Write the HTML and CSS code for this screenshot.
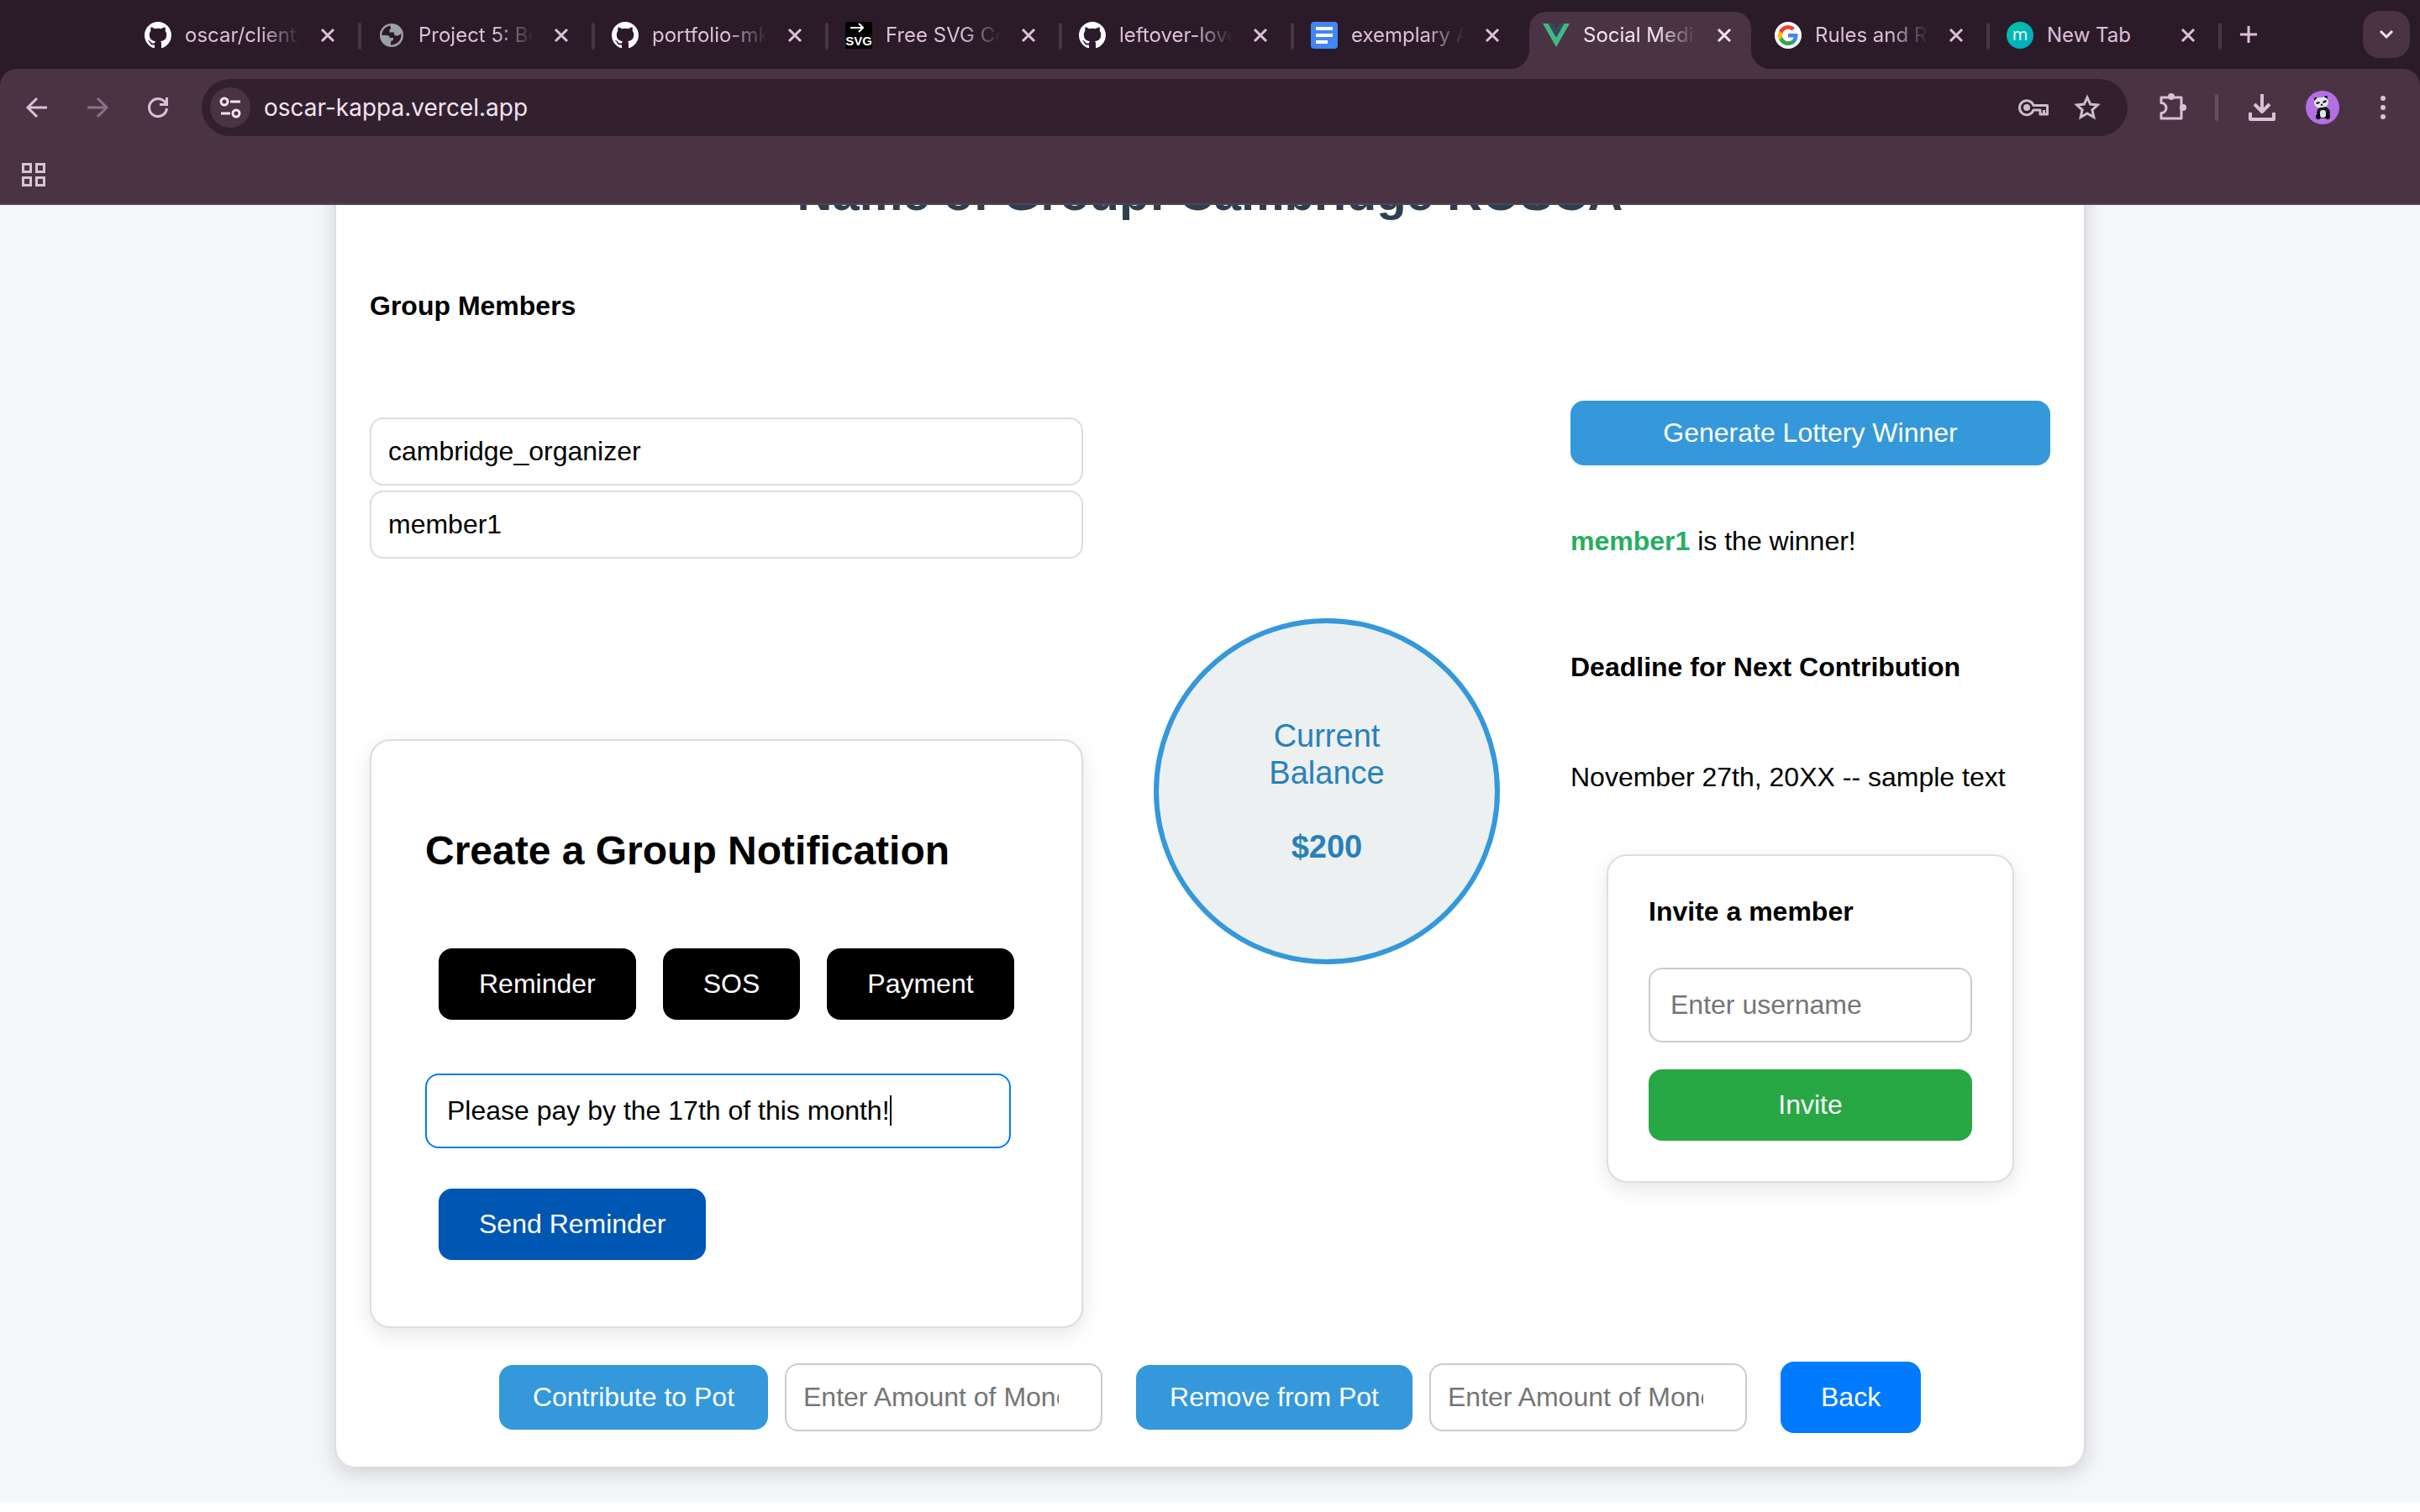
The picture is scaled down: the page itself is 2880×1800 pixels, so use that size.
FILE: index.html
```html
<!DOCTYPE html>
<html lang="en">
<head>
<meta charset="utf-8">
<title>Social Media App</title>
<link rel="stylesheet" href="styles.css">
</head>
<body>
<svg class="defs" aria-hidden="true">
  <symbol id="github" viewBox="0 0 16 16"><path d="M8 0C3.58 0 0 3.58 0 8c0 3.54 2.29 6.53 5.47 7.59.4.07.55-.17.55-.38 0-.19-.01-.82-.01-1.49-2.01.37-2.53-.49-2.69-.94-.09-.23-.48-.94-.82-1.13-.28-.15-.68-.52-.01-.53.63-.01 1.08.58 1.23.82.72 1.21 1.87.87 2.33.66.07-.52.28-.87.51-1.07-1.78-.2-3.64-.89-3.64-3.95 0-.87.31-1.59.82-2.15-.08-.2-.36-1.02.08-2.12 0 0 .67-.21 2.2.82a7.6 7.6 0 0 1 4 0c1.53-1.04 2.2-.82 2.2-.82.44 1.1.16 1.92.08 2.12.51.56.82 1.27.82 2.15 0 3.07-1.87 3.75-3.65 3.95.29.25.54.73.54 1.48 0 1.07-.01 1.93-.01 2.2 0 .21.15.46.55.38A8 8 0 0 0 16 8c0-4.42-3.58-8-8-8z" fill="#fff"/></symbol>
  <symbol id="close" viewBox="0 0 18 18"><path d="M2 2l14 14M16 2L2 16" stroke="currentColor" stroke-width="3" fill="none"/></symbol>
</svg>

<header class="browser">
  <nav class="tabs" aria-label="Tabs">
    <div class="tab"><svg class="favicon"><use href="#github"/></svg><span class="tab-title">oscar/client/</span><button class="tab-close" aria-label="Close"><svg><use href="#close"/></svg></button></div>
    <div class="tab"><svg class="favicon" viewBox="0 0 32 32"><circle cx="16" cy="16" r="14" fill="#9aa0a6"/><path d="M14 4.500C8 6 4.500 10.500 4.500 16h5c3 0 4 1 4.500 3h4v3c-2 0-3 1-3 3v2.500C22 27.500 27.500 22.500 27.500 16c0-1-.1-1.500-.3-2.500-1 2-3 3-5.200 3-3 0-3-2-3-4h-5.500V9c2.500 0 1.500-3 .5-4.500z" fill="#2b1b29"/></svg><span class="tab-title">Project 5: Be</span><button class="tab-close" aria-label="Close"><svg><use href="#close"/></svg></button></div>
    <div class="tab"><svg class="favicon"><use href="#github"/></svg><span class="tab-title">portfolio-mk</span><button class="tab-close" aria-label="Close"><svg><use href="#close"/></svg></button></div>
    <div class="tab"><svg class="favicon" viewBox="0 0 32 32"><path d="M0 0h32v32H0z"/><path d="M6 7h15M16 2l5 5-5 5" fill="none" stroke="#fff" stroke-width="2"/><text class="svg-word" x="16" y="28" text-anchor="middle">SVG</text></svg><span class="tab-title">Free SVG Co</span><button class="tab-close" aria-label="Close"><svg><use href="#close"/></svg></button></div>
    <div class="tab"><svg class="favicon"><use href="#github"/></svg><span class="tab-title">leftover-love</span><button class="tab-close" aria-label="Close"><svg><use href="#close"/></svg></button></div>
    <div class="tab"><svg class="favicon" viewBox="0 0 32 32"><rect width="32" height="32" rx="4" fill="#4285f4"/><path d="M6 8h20M6 16h20M6 24h14" stroke="#fff" stroke-width="4"/></svg><span class="tab-title">exemplary A</span><button class="tab-close" aria-label="Close"><svg><use href="#close"/></svg></button></div>
    <div class="tab tab-active"><svg class="favicon" viewBox="0 0 32 32"><path d="M0 2h6.500L16 18.500 25.500 2H32L16 30z" fill="#41b883"/><path d="M6.500 2h6L16 8l3.500-6h6L16 18.500z" fill="#35495e"/></svg><span class="tab-title">Social Media</span><button class="tab-close" aria-label="Close"><svg><use href="#close"/></svg></button></div>
    <div class="tab"><svg class="favicon" viewBox="0 0 32 32"><circle cx="16" cy="16" r="16" fill="#fff"/><g transform="translate(4 4)"><path d="M23.500 12.300c0-.8-.1-1.600-.2-2.300H12v4.500h6.500a5.500 5.500 0 0 1-2.400 3.600v3h3.900c2.200-2.100 3.500-5.200 3.500-8.800z" fill="#4285f4"/><path d="M12 24c3.200 0 6-1.100 8-2.900l-3.900-3c-1.100.7-2.500 1.200-4.100 1.200-3.100 0-5.800-2.100-6.700-5H1.300v3.100A12 12 0 0 0 12 24z" fill="#34a853"/><path d="M5.300 14.300a7 7 0 0 1 0-4.600V6.600h-4a12 12 0 0 0 0 10.800z" fill="#fbbc05"/><path d="M12 4.800c1.800 0 3.300.6 4.600 1.800L20 3.200A12 12 0 0 0 1.300 6.600l4 3.100c.9-2.800 3.600-4.900 6.700-4.900z" fill="#ea4335"/></g></svg><span class="tab-title">Rules and Re</span><button class="tab-close" aria-label="Close"><svg><use href="#close"/></svg></button></div>
    <div class="tab"><svg class="favicon" viewBox="0 0 32 32"><linearGradient id="teal" x2="1" y2="1"><stop stop-color="#00c4a0"/><stop offset="1" stop-color="#00a8cc"/></linearGradient><circle cx="16" cy="16" r="16" fill="url(#teal)"/><text class="m-word" x="16" y="22" text-anchor="middle">m</text></svg><span class="tab-title">New Tab</span><button class="tab-close" aria-label="Close"><svg><use href="#close"/></svg></button></div>
    <button class="new-tab" aria-label="New tab"><svg viewBox="0 0 20 20"><path d="M10 0v20M0 10h20" stroke="currentColor" stroke-width="3"/></svg></button>
    <button class="tab-search" aria-label="Search tabs"><svg viewBox="0 0 18 12"><path d="M2 2l7 7 7-7" fill="none" stroke="currentColor" stroke-width="3"/></svg></button>
  </nav>
  <div class="toolbar">
    <button class="tool" aria-label="Back"><svg viewBox="0 0 32 32"><path d="M28 16H6M16 5L5 16l11 11" fill="none" stroke="currentColor" stroke-width="3"/></svg></button>
    <button class="tool tool-dim" aria-label="Forward"><svg viewBox="0 0 32 32"><path d="M4 16h22M16 5l11 11-11 11" fill="none" stroke="currentColor" stroke-width="3"/></svg></button>
    <button class="tool" aria-label="Reload"><svg viewBox="0 0 32 32"><path d="M25.500 11.500A10.500 10.500 0 1 0 26.500 17M26.500 4v8.500H18" fill="none" stroke="currentColor" stroke-width="3"/></svg></button>
    <div class="omnibox">
      <button class="site-info" aria-label="Site information"><svg viewBox="0 0 28 28"><g fill="none" stroke="currentColor" stroke-width="3"><circle cx="7" cy="7" r="4"/><path d="M14 7h12M3 21h11"/><circle cx="21" cy="21" r="4"/></g></svg></button>
      <input class="url" type="text" value="oscar-kappa.vercel.app" aria-label="Address">
      <button class="omni-btn" aria-label="Passwords"><svg class="key" viewBox="0 0 36 28"><path d="M18 11.500h16.500V22H26v-5h-8a8.500 8.500 0 1 1 0-5.500zM30.500 22v-5" fill="none" stroke="currentColor" stroke-width="3" stroke-linejoin="round"/><circle cx="10" cy="14" r="4" fill="currentColor"/></svg></button>
      <button class="omni-btn" aria-label="Bookmark"><svg viewBox="0 0 32 32"><path d="M16 4l3.700 8.100 8.600.900-6.400 5.800 1.900 8.700-7.800-4.600-7.800 4.600 1.900-8.700L3.700 13l8.600-.9z" fill="none" stroke="currentColor" stroke-width="3"/></svg></button>
    </div>
    <button class="tool tool-extensions" aria-label="Extensions"><svg viewBox="0 0 32 36"><path d="M2 6h24v25H2v-6.500a6 6 0 0 0 0-12z" fill="none" stroke="currentColor" stroke-width="3" stroke-linejoin="round"/><g fill="currentColor"><circle cx="14" cy="5" r="4"/><circle cx="28" cy="18" r="4"/></g></svg></button>
    <span class="tool-sep"></span>
    <button class="tool tool-downloads" aria-label="Downloads"><svg viewBox="0 0 32 32"><path d="M16 0v20M7 12l9 9 9-9M2 22v8h28v-8" fill="none" stroke="currentColor" stroke-width="4" stroke-linejoin="round"/></svg></button>
    <button class="avatar" aria-label="Profile"><svg viewBox="0 0 40 40"><circle cx="20" cy="20" r="20" fill="#b46fe3"/><circle cx="12" cy="10" r="2"/><circle cx="24" cy="8" r="2"/><ellipse cx="21" cy="26" rx="8" ry="7" fill="#161616"/><circle cx="15" cy="31" r="3"/><circle cx="26" cy="31" r="3"/><rect x="17" y="23" width="7" height="9" rx="3" fill="#dfe3e6"/><rect x="10" y="8" width="17" height="12" rx="6" fill="#e4e4ea" transform="rotate(-8 18 14)"/><path d="M12.500 15l4-1M20.500 14l4-2M18 17l2-.5" stroke="#111" stroke-width="2"/></svg></button>
    <button class="menu" aria-label="Menu"><svg viewBox="0 0 8 28"><g fill="currentColor"><circle cx="4" cy="3" r="3"/><circle cx="4" cy="14" r="3"/><circle cx="4" cy="25" r="3"/></g></svg></button>
  </div>
  <div class="bookmarks">
    <button class="apps" aria-label="Apps"><svg viewBox="0 0 28 28"><path d="M1.500 1.500h9v9h-9zM17.500 1.500h9v9h-9zM1.500 17.500h9v9h-9zM17.500 17.500h9v9h-9z" fill="none" stroke="currentColor" stroke-width="3"/></svg></button>
  </div>
</header>

<div class="viewport">
  <main class="card">
    <h1 class="title">Name of Group: Cambridge ROSCA</h1>
    <div class="columns">
      <section class="left">
        <h2 class="label">Group Members</h2>
        <ul class="members">
          <li class="member">cambridge_organizer</li>
          <li class="member">member1</li>
        </ul>
        <form class="panel notify">
          <h2 class="notify-title">Create a Group Notification</h2>
          <div class="choices">
            <button type="button" class="btn btn-black">Reminder</button>
            <button type="button" class="btn btn-black">SOS</button>
            <button type="button" class="btn btn-black">Payment</button>
          </div>
          <div class="message">
            <input class="field message-field" type="text" value="Please pay by the 17th of this month!" aria-label="Message">
            <span class="caret"></span>
          </div>
          <button type="button" class="btn btn-navy">Send Reminder</button>
        </form>
      </section>
      <section class="pot">
        <p>Current Balance</p>
        <p><strong>$200</strong></p>
      </section>
      <section class="right">
        <button class="btn btn-sky">Generate Lottery Winner</button>
        <p class="winner"><strong>member1</strong> is the winner!</p>
        <h2 class="label">Deadline for Next Contribution</h2>
        <p class="deadline">November 27th, 20XX -- sample text</p>
        <form class="panel invite">
          <label class="label" for="username">Invite a member</label>
          <input class="field" id="username" type="text" placeholder="Enter username">
          <button type="button" class="btn btn-green">Invite</button>
        </form>
      </section>
    </div>
    <div class="actions">
      <div class="action">
        <button class="btn btn-sky">Contribute to Pot</button>
        <input class="field amount" type="text" placeholder="Enter Amount of Money" aria-label="Amount to contribute">
      </div>
      <div class="action">
        <button class="btn btn-sky">Remove from Pot</button>
        <input class="field amount" type="text" placeholder="Enter Amount of Money" aria-label="Amount to remove">
      </div>
      <button class="btn btn-blue">Back</button>
    </div>
  </main>
</div>
</body>
</html>
```
FILE: styles.css
```css
* {
  box-sizing: border-box;
}

body {
  margin: 0;
  background: #fff;
  color: #000;
  font: 32px/37px "Liberation Sans", Arial, sans-serif;
}

h1, h2, p, ul {
  margin: 0;
  padding: 0;
}

button, input {
  margin: 0;
  font: inherit;
}

button {
  padding: 0;
  border: 0;
  background: none;
  color: inherit;
}

svg {
  display: block;
}

.defs {
  position: absolute;
  width: 0;
  height: 0;
}

/* Browser frame */

.browser {
  position: relative;
  z-index: 1;
  background: #2b1b29;
  color: #dcc0d8;
  font: 24px/32px Inter, sans-serif;
}

.tabs {
  display: flex;
  align-items: center;
  height: 82px;
  padding: 0 12px 0 152px;
}

.tab {
  position: relative;
  display: flex;
  flex: 0 1 276px;
  align-items: center;
  min-width: 0;
  height: 68px;
  margin-top: 14px;
  padding: 0 31px 12px 20px;
}

.tab:nth-child(-n+4) {
  flex-basis: 278px;
}

.tab::after {
  content: "";
  position: absolute;
  top: 13px;
  right: 0;
  width: 4px;
  height: 32px;
  border-radius: 2px;
  background: #4a3444;
}

.tab:has(+ .tab-active)::after {
  display: none;
}

.tab-active {
  color: #f2e4ef;
}

.tab-active::before {
  content: "";
  position: absolute;
  inset: 0 8px 0 4px;
  border-radius: 20px 20px 0 0;
  background: #4a3444;
}

/* Curved feet that join the active tab to the toolbar */
.tab-active::after {
  inset: auto -16px 0 -20px;
  width: auto;
  height: 24px;
  border-radius: 0;
  background:
    radial-gradient(circle at 0 0, transparent 24px, #4a3444 25px) left / 24px 24px no-repeat,
    radial-gradient(circle at 100% 0, transparent 24px, #4a3444 25px) right / 24px 24px no-repeat;
}

.tab-active > * {
  position: relative;
}

.favicon {
  flex: none;
  width: 32px;
  height: 32px;
}

.svg-word {
  fill: #fff;
  font: bold 15px "Liberation Sans", sans-serif;
}

.m-word {
  fill: #fff;
  font: 20px "Open Sans", sans-serif;
}

.tab-title {
  flex: 1;
  margin: 0 24px 0 16px;
  overflow: hidden;
  white-space: nowrap;
  mask-image: linear-gradient(to right, #000 66%, transparent);
}

.tab:nth-child(9) .tab-title {
  mask-image: none;
}

.tab-close svg {
  width: 18px;
  height: 18px;
}

.new-tab {
  margin-left: 22px;
}

.new-tab svg {
  width: 20px;
  height: 20px;
}

.tab-search {
  display: grid;
  place-items: center;
  width: 56px;
  height: 56px;
  margin-left: auto;
  border-radius: 20px;
  background: #4a3444;
  color: #f2e4ef;
}

.tab-search svg {
  width: 18px;
  height: 12px;
}

.toolbar {
  display: flex;
  align-items: center;
  padding: 12px 28px 0;
  border-radius: 20px 20px 0 0;
  background: #4a3444;
}

.tool {
  flex: none;
}

.tool svg {
  width: 32px;
  height: 32px;
}

.tool + .tool {
  margin-left: 40px;
}

.tool-dim {
  color: #8d7287;
}

.omnibox {
  display: flex;
  flex: 1;
  align-items: center;
  gap: 30px;
  height: 68px;
  margin: 0 38px 0 36px;
  padding: 0 32px 0 10px;
  border-radius: 34px;
  background: #33202f;
  color: #f2e4ef;
}

.site-info {
  display: grid;
  place-items: center;
  width: 48px;
  height: 48px;
  border-radius: 50%;
  background: #4a3444;
}

.site-info svg {
  width: 28px;
  height: 28px;
}

.url {
  flex: 1;
  min-width: 0;
  margin-left: -14px;
  padding: 0;
  border: 0;
  background: none;
  color: inherit;
  font-size: 28px;
}

.omni-btn {
  color: #cdbcc9;
}

.omni-btn svg {
  width: 32px;
  height: 32px;
}

.omni-btn .key {
  width: 36px;
  height: 28px;
}

.tool-extensions svg {
  height: 36px;
}

.tool-sep {
  width: 4px;
  height: 32px;
  margin: 0 36px 0 34px;
  border-radius: 2px;
  background: #67505f;
}

.avatar {
  margin: 0 48px 0 36px;
}

.avatar svg {
  width: 40px;
  height: 40px;
}

.menu {
  margin-right: 12px;
}

.menu svg {
  width: 8px;
  height: 28px;
}

.bookmarks {
  padding: 32px 26px 20px;
  border-bottom: 2px solid #4f454d;
  background: #4a3444;
  color: #d6c6d2;
}

.apps {
  display: block;
}

.apps svg {
  width: 28px;
  height: 28px;
}

/* Page */

.viewport {
  overflow: hidden;
  padding: 0 398px 42px;
  background: #f5f6fa;
}

.card {
  margin-top: -66px;
  padding: 14px 40px 40px;
  border: 2px solid #ddd;
  border-bottom: 0;
  border-radius: 24px;
  background: #fff;
  box-shadow: 0 8px 24px rgb(0 0 0 / 15%);
}

.title {
  color: #2c3e50;
  font-size: 58px;
  line-height: 72px;
  text-align: center;
}

.columns {
  display: grid;
  grid-template-columns: 849px 412px 571px;
  justify-content: space-between;
}

.label {
  font-size: 32px;
  font-weight: bold;
}

.left {
  padding-top: 80px;
}

.members {
  display: grid;
  gap: 6px;
  margin: 114px 0 215px;
  list-style: none;
}

.member {
  padding: 20px;
  border: 2px solid #ddd;
  border-radius: 16px;
}

.panel {
  display: flex;
  flex-direction: column;
  border: 2px solid #ddd;
  border-radius: 24px;
  background: #fff;
  box-shadow: 0 8px 24px rgb(0 0 0 / 10%);
}

.notify {
  align-items: flex-start;
  padding: 103px 64px 79px;
}

.notify-title {
  font-size: 48px;
  line-height: 56px;
}

.choices {
  display: flex;
  gap: 32px;
  margin: 88px 16px 64px;
}

.btn {
  padding: 24px 48px;
  border-radius: 16px;
  color: #fff;
  white-space: nowrap;
}

.btn-black {
  background: #000;
}

.btn-navy {
  margin-left: 16px;
  background: #0056b3;
}

.btn-sky {
  padding: 20px 40px;
  background: #3498db;
}

.btn-green {
  background: #28a745;
}

.btn-blue {
  background: #007bff;
}

.field {
  display: block;
  width: 100%;
  height: 89px;
  padding: 0 24px;
  border: 2px solid #ccc;
  border-radius: 16px;
  outline: 0;
  background: #fff;
}

.field::placeholder {
  color: #757575;
}

.message {
  position: relative;
  align-self: stretch;
  margin-bottom: 48px;
  padding-right: 20px;
}

.message-field {
  border-color: #007bff;
  caret-color: transparent;
}

.caret {
  position: absolute;
  top: 26px;
  left: 553px;
  width: 2px;
  height: 36px;
  background: #000;
}

.pot {
  display: flex;
  flex-direction: column;
  gap: 44px;
  justify-content: center;
  height: 412px;
  margin-top: 470px;
  padding: 0 100px;
  border: 6px solid #3498db;
  border-radius: 50%;
  background: #ecf0f1;
  color: #2980b9;
  font-size: 38px;
  line-height: 44px;
  text-align: center;
}

.right {
  display: flex;
  flex-direction: column;
  padding-top: 211px;
}

.winner {
  margin: 72px 0 113px;
}

.winner strong {
  color: #27ae60;
}

.deadline {
  margin: 94px 0 73px;
}

.invite {
  gap: 32px;
  margin: 0 43px;
  padding: 48px;
}

.invite .field {
  margin-top: 16px;
}

.actions {
  display: flex;
  align-items: center;
  justify-content: center;
  gap: 40px;
  margin-top: 40px;
}

.action {
  display: flex;
  align-items: center;
  gap: 20px;
}

.amount {
  width: 378px;
  height: 81px;
  padding: 0 50px 0 20px;
}
```
